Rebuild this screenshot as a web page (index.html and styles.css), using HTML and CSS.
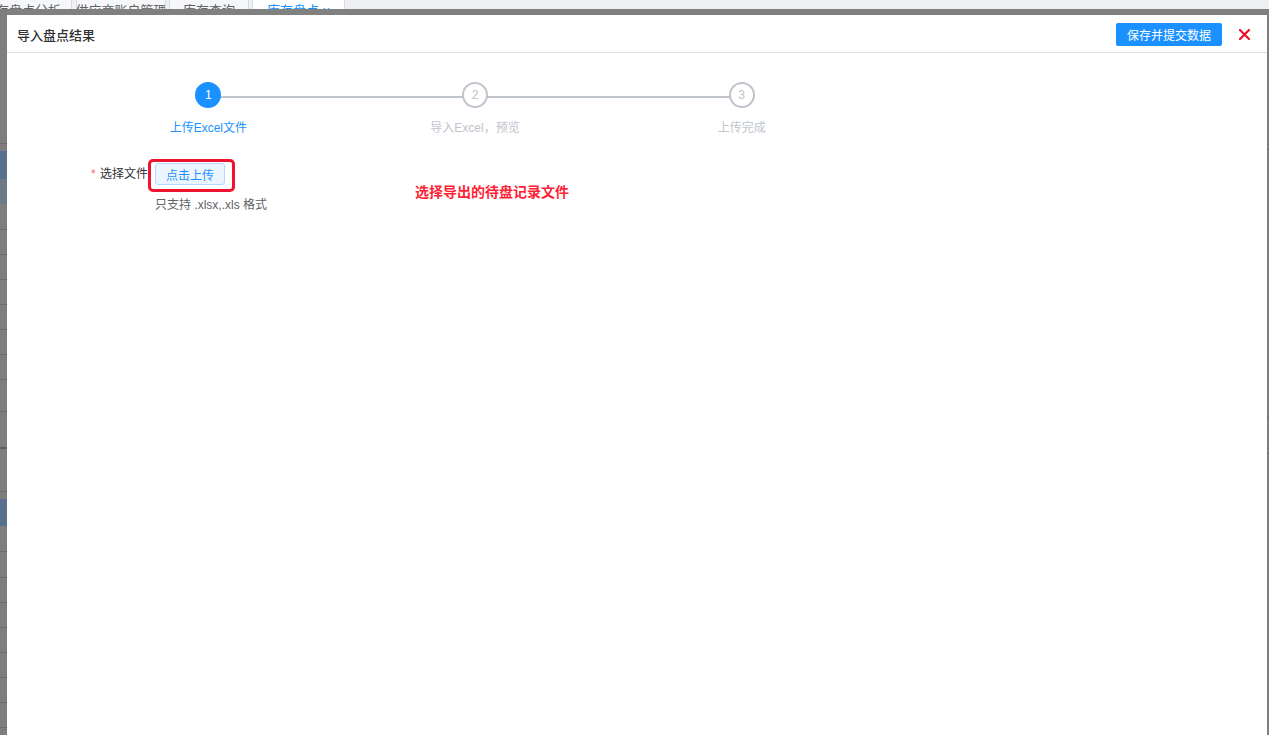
FILE: index.html
```
<!DOCTYPE html>
<html lang="zh-CN">
<head>
<meta charset="utf-8">
<title>导入盘点结果</title>
<link rel="stylesheet" href="styles.css">
</head>
<body>
<div class="tabbar">
  <div class="tab t1"><span>库存盘点分析</span></div>
  <div class="tab t2"><span>供应商账户管理</span></div>
  <div class="tab t3"><span>库存查询</span></div>
  <div class="tab t4 active"><span>库存盘点 ×</span></div>
</div>
<div class="mask">
  <div class="strip-left"></div>
  <div class="dialog">
    <div class="dlg-header">
      <div class="dlg-title">导入盘点结果</div>
      <div class="dlg-actions">
        <button class="btn-primary">保存并提交数据</button>
        <span class="close">
          <svg width="11" height="11" viewBox="0 0 11 11"><path d="M1 1 L10 10 M10 1 L1 10" stroke="#f0102a" stroke-width="2.2" stroke-linecap="square"/></svg>
        </span>
      </div>
    </div>
    <div class="dlg-body">
      <div class="steps">
        <div class="step done">
          <div class="step-head"><span class="line"></span><span class="icon">1</span></div>
          <div class="step-title">上传Excel文件</div>
        </div>
        <div class="step">
          <div class="step-head"><span class="line"></span><span class="icon">2</span></div>
          <div class="step-title">导入Excel，预览</div>
        </div>
        <div class="step last">
          <div class="step-head"><span class="icon">3</span></div>
          <div class="step-title">上传完成</div>
        </div>
      </div>
      <div class="form-item">
        <label class="form-label"><span class="req">*</span> 选择文件</label>
        <div class="form-content">
          <div class="upload-wrap">
            <button class="btn-upload">点击上传</button>
            <span class="annot-box"></span>
          </div>
          <div class="tip">只支持 .xlsx,.xls 格式</div>
        </div>
      </div>
      <div class="annot-text">选择导出的待盘记录文件</div>
    </div>
  </div>
  <div class="strip-right"></div>
</div>
</body>
</html>
```
FILE: styles.css
```
* { box-sizing: border-box; }
html, body { margin: 0; padding: 0; }
body {
  width: 1269px;
  height: 735px;
  overflow: hidden;
  font-family: "Liberation Sans", "Noto Sans CJK SC", sans-serif;
  background: #808080;
}
.tabbar {
  height: 9px;
  background: #eef0f3;
  display: flex;
  overflow: hidden;
}
.tab {
  height: 9px;
  background: #f6f7f9;
  border-right: 1px solid #d8dbe0;
  border-left: 1px solid #d8dbe0;
  overflow: hidden;
  font-size: 13px;
  color: #606266;
  display: flex;
  justify-content: center;
  align-items: flex-end;
}
.tab span { display: block; line-height: 13px; margin-bottom: -8px; white-space: nowrap; }
.t1 { width: 72px; border-left: none; justify-content: flex-end; padding-right: 10px; }
.t2 { width: 90px; margin-left: 4px; }
.t3 { width: 80px; margin-left: 3px; }
.t4 { width: 93px; margin-left: 3px; background: #fff; color: #1890ff; }
.mask {
  display: flex;
  height: 726px;
  padding-top: 6px;
}
.strip-left {
  width: 7px;
  margin-top: -6px;
  height: 726px;
  background:
    linear-gradient(#56708e, #56708e) 0 142px / 100% 28px no-repeat,
    linear-gradient(#6b7a83, #6b7a83) 0 170px / 100% 25px no-repeat,
    linear-gradient(#56708e, #56708e) 0 490px / 100% 27px no-repeat,
    linear-gradient(#6a6a6a, #6a6a6a) 0 134px / 100% 1px no-repeat,
    linear-gradient(#6a6a6a, #6a6a6a) 0 220px / 100% 1px no-repeat,
    linear-gradient(#6a6a6a, #6a6a6a) 0 245px / 100% 1px no-repeat,
    linear-gradient(#6a6a6a, #6a6a6a) 0 270px / 100% 1px no-repeat,
    linear-gradient(#6a6a6a, #6a6a6a) 0 295px / 100% 1px no-repeat,
    linear-gradient(#6a6a6a, #6a6a6a) 0 320px / 100% 1px no-repeat,
    linear-gradient(#6a6a6a, #6a6a6a) 0 345px / 100% 1px no-repeat,
    linear-gradient(#6a6a6a, #6a6a6a) 0 370px / 100% 1px no-repeat,
    linear-gradient(#6a6a6a, #6a6a6a) 0 402px / 100% 1px no-repeat,
    linear-gradient(#5e5e5e, #5e5e5e) 0 438px / 100% 2px no-repeat,
    linear-gradient(#6a6a6a, #6a6a6a) 0 482px / 100% 1px no-repeat,
    linear-gradient(#6a6a6a, #6a6a6a) 0 542px / 100% 1px no-repeat,
    linear-gradient(#6a6a6a, #6a6a6a) 0 568px / 100% 1px no-repeat,
    linear-gradient(#6a6a6a, #6a6a6a) 0 593px / 100% 1px no-repeat,
    linear-gradient(#6a6a6a, #6a6a6a) 0 618px / 100% 1px no-repeat,
    linear-gradient(#6a6a6a, #6a6a6a) 0 643px / 100% 1px no-repeat,
    linear-gradient(#6a6a6a, #6a6a6a) 0 668px / 100% 1px no-repeat,
    linear-gradient(#6a6a6a, #6a6a6a) 0 693px / 100% 1px no-repeat,
    linear-gradient(#6a6a6a, #6a6a6a) 0 718px / 100% 1px no-repeat,
    #7e7e7e;
}
.strip-right {
  width: 2px;
  background:
    linear-gradient(#6a6a6a, #6a6a6a) 0 134px / 100% 1px no-repeat,
    linear-gradient(#6a6a6a, #6a6a6a) 0 402px / 100% 1px no-repeat,
    linear-gradient(#6a6a6a, #6a6a6a) 0 438px / 100% 1px no-repeat,
    #7e7e7e;
}
.dialog {
  width: 1260px;
  background: #fff;
  display: flex;
  flex-direction: column;
}
.dlg-header {
  height: 38px;
  border-bottom: 1px solid #dcdfe6;
  display: flex;
  align-items: center;
  justify-content: space-between;
  padding: 0 17px 0 10px;
}
.dlg-title {
  font-size: 13px;
  color: #303133;
  font-weight: 500;
  padding-top: 2px;
}
.dlg-actions { display: flex; align-items: center; gap: 17px; padding-top: 1px; }
.btn-primary {
  width: 106px;
  height: 23px;
  border: none;
  border-radius: 2px;
  background: #1b91ff;
  color: #fff;
  font-family: inherit;
  font-size: 12px;
  padding: 0;
  cursor: pointer;
}
.close { display: flex; width: 11px; height: 11px; }
.dlg-body {
  position: relative;
  flex: 1;
  padding-top: 29px;
}
.steps {
  display: flex;
  width: 800px;
  margin-left: 68px;
}
.step { flex: 1; display: flex; flex-direction: column; align-items: center; }
.step-head {
  position: relative;
  width: 100%;
  height: 26px;
  display: flex;
  justify-content: center;
}
.line {
  position: absolute;
  left: 50%;
  width: 100%;
  top: 14px;
  height: 2px;
  background: #c0c4cc;
}
.icon {
  position: relative;
  width: 26px;
  height: 26px;
  border-radius: 50%;
  border: 2px solid #c0c4cc;
  background: #fff;
  color: #c0c4cc;
  font-size: 12px;
  display: flex;
  align-items: center;
  justify-content: center;
}
.done .icon { background: #1b91ff; border-color: #1b91ff; color: #fff; }
.step-title {
  margin-top: 10px;
  font-size: 12px;
  line-height: 20px;
  color: #c0c4cc;
}
.done .step-title { color: #1b91ff; }
.form-item {
  display: flex;
  margin-top: 25px;
}
.form-label {
  width: 148px;
  padding-right: 7px;
  text-align: right;
  font-size: 12px;
  line-height: 22px;
  color: #303133;
}
.req { color: #f56c6c; margin-right: 1px; }
.form-content { display: flex; flex-direction: column; align-items: flex-start; }
.upload-wrap { position: relative; }
.btn-upload {
  display: block;
  width: 70px;
  height: 22px;
  background: #ecf5ff;
  border: 1px solid #b3d8ff;
  border-radius: 3px;
  color: #1b91ff;
  font-family: inherit;
  font-size: 12px;
  padding: 0;
}
.annot-box {
  position: absolute;
  left: -7px;
  top: -4px;
  width: 87px;
  height: 33px;
  border: 3px solid #ee1430;
  border-radius: 5px;
}
.tip {
  margin-top: 10px;
  font-size: 12px;
  line-height: 20px;
  color: #606266;
}
.annot-text {
  position: absolute;
  left: 408px;
  top: 129px;
  font-size: 14px;
  line-height: 20px;
  font-weight: bold;
  color: #ff1f36;
}
```
